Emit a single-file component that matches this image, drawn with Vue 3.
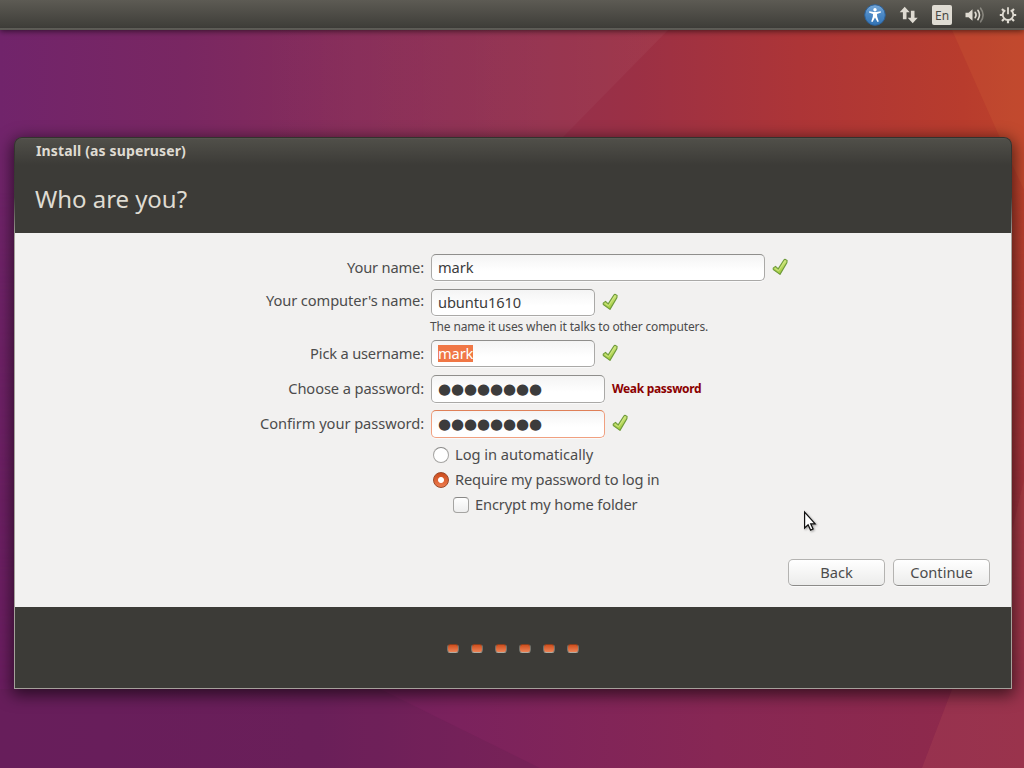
<script setup>
const steps = [1, 2, 3, 4, 5, 6]
const rows = [
  { id: 'name', label: 'Your name:', value: 'mark', ok: true },
  { id: 'host', label: "Your computer's name:", value: 'ubuntu1610', ok: true },
  { id: 'user', label: 'Pick a username:', value: 'mark', ok: true, selected: true },
  { id: 'pass', label: 'Choose a password:', value: '●●●●●●●●', secret: true, warn: 'Weak password' },
  { id: 'confirm', label: 'Confirm your password:', value: '●●●●●●●●', secret: true, ok: true },
]
</script>

<template>
  <div class="desktop">
    <svg class="wallpaper" width="1024" height="768" viewBox="0 0 1024 768" preserveAspectRatio="none">
      <defs>
        <linearGradient id="top" x1="0" y1="0" x2="1" y2="0">
          <stop offset="0" stop-color="#71246b" />
          <stop offset=".18" stop-color="#792762" />
          <stop offset=".35" stop-color="#882d59" />
          <stop offset=".5" stop-color="#92304f" />
          <stop offset=".62" stop-color="#9b3045" />
          <stop offset=".78" stop-color="#ad3537" />
          <stop offset=".94" stop-color="#b83c2d" />
          <stop offset="1" stop-color="#bd422c" />
        </linearGradient>
        <linearGradient id="low" x1="0" y1="0" x2="1" y2="0">
          <stop offset="0" stop-color="#6b1e60" />
          <stop offset=".3" stop-color="#6e205d" />
          <stop offset=".45" stop-color="#7b225d" />
          <stop offset=".7" stop-color="#872754" />
          <stop offset="1" stop-color="#902a49" />
        </linearGradient>
        <linearGradient id="fade" x1="0" y1="0" x2="0" y2="1">
          <stop offset=".25" stop-color="#fff" stop-opacity="0" />
          <stop offset=".9" stop-color="#fff" />
        </linearGradient>
        <linearGradient id="ray" x1="0" y1="0" x2="1" y2="0">
          <stop offset=".1" stop-color="#fff" stop-opacity="0" />
          <stop offset="1" stop-color="#fff" />
        </linearGradient>
        <mask id="m"><rect width="1024" height="768" fill="url(#fade)" /></mask>
      </defs>
      <rect width="1024" height="768" fill="url(#top)" />
      <rect width="1024" height="768" fill="url(#low)" mask="url(#m)" />
      <path d="M668 30 562 138H200V30z" fill="url(#ray)" opacity=".04" />
      <path d="M952 30 1000 138 1024 190V30z" fill="#d96a36" opacity=".2" />
      <path d="M380 689 540 768H0V689z" fill="#5a1c4d" opacity=".2" />
      <path d="M1024 480 1011 535 922 768H1024z" fill="#c55a5a" opacity=".2" />
    </svg>

    <header class="panel">
      <svg class="access" width="22" height="22" viewBox="0 0 22 22">
        <defs><linearGradient id="blue" x1="0" y1="0" x2="0" y2="1"><stop stop-color="#78a9d9" /><stop offset=".5" stop-color="#4987c5" /><stop offset="1" stop-color="#3474b5" /></linearGradient></defs>
        <circle cx="11" cy="11" r="10.3" fill="url(#blue)" stroke="#2d6199" />
        <circle cx="11" cy="5.7" r="1.7" fill="#fff" />
        <path d="M5.3 7.2 9.5 8.1h3l4.2-.9.3 1.2-4 1.5.2 2.9 1.6 4.6-1.3.5L11 13.6 8.5 17.9l-1.3-.5L8.8 12.8 9 9.9 5 8.4z" fill="#fff" />
      </svg>
      <svg class="net" width="20" height="18" viewBox="0 0 20 18" fill="#dfdbd2">
        <path d="M5.7.8 10.7 6.3H7.5v7H3.9v-7H.7zM13.7 17.2 8.7 11.7h3.2v-7h3.6v7h3.2z" />
      </svg>
      <span class="lang">En</span>
      <svg class="sound" width="20" height="18" viewBox="0 0 20 18">
        <path d="M.5 6.7h3L7.5 3.2v11.6l-4-3.5h-3z" fill="#dfdbd2" />
        <g fill="none" stroke="#dfdbd2" stroke-width="1.6" stroke-linecap="round">
          <path d="M10.1 6.3q2 2.7 0 5.4" />
          <path d="M12.9 4.3q3.2 4.7 0 9.4" />
          <path d="M15.6 2.2q5 6.8 0 13.6" opacity=".4" />
        </g>
      </svg>
      <svg class="gear" width="18" height="18" viewBox="0 0 18 18" fill="none" stroke="#dfdbd2">
        <path d="M6.3 4.2a5.3 5.3 0 1 0 5.4 0" stroke-width="1.9" />
        <path d="M9 1.2v7" stroke-width="1.8" />
        <path d="M3 3l2 2M15 3l-2 2M.8 9H4M14 9h3.2M3 15l2-2M15 15l-2-2M9 14v3.2" stroke-width="2.2" />
      </svg>
    </header>

    <main class="window">
      <div class="heading">
        <div class="title">Install (as superuser)</div>
        <h1>Who are you?</h1>
      </div>
      <section class="content">
        <div class="form">
          <template v-for="r in rows" :key="r.id">
            <div class="row" :class="r.id">
              <label><span>{{ r.label }}</span></label>
              <div class="field" :class="{ secret: r.secret }">
                <span :class="{ selected: r.selected }">{{ r.value }}</span>
              </div>
              <svg v-if="r.ok" class="tick" width="17" height="18" viewBox="0 0 17 18">
                <defs><linearGradient id="leaf" x1="0" y1="0" x2="0" y2="1"><stop stop-color="#cfe67e" /><stop offset="1" stop-color="#a2cb3d" /></linearGradient></defs>
                <path d="M1.2 10.1 3.5 8.4 6.2 10.9 11.9 2Q12.6 1 13.7 1.6L15.1 2.5 14.9 4.6 8 16.4 1.3 11.5z" fill="url(#leaf)" stroke="#6f9b3b" stroke-width="1.1" stroke-linejoin="round" />
                <path d="M2.8 10.2 6.5 12.8 12.8 3" fill="none" stroke="#d3e98c" stroke-width=".8" />
              </svg>
              <strong v-if="r.warn">{{ r.warn }}</strong>
            </div>
            <div v-if="r.id === 'host'" class="hint"><span>The name it uses when it talks to other computers.</span></div>
          </template>
        </div>
        <div class="options">
          <div class="option auto"><i class="radio"></i><span>Log in automatically</span></div>
          <div class="option require"><i class="radio on"></i><span>Require my password to log in</span></div>
          <div class="option encrypt"><i class="check"></i><span>Encrypt my home folder</span></div>
        </div>
        <div class="actions">
          <button class="back">Back</button>
          <button class="continue">Continue</button>
        </div>
      </section>
      <footer><i v-for="s in steps" :key="s"></i></footer>
    </main>

    <svg class="cursor" width="16" height="23" viewBox="0 0 16 23">
      <path d="M1.6 2v16l3.5-3.3 2.5 5.4 2.5-1.1-2.4-5.2h4.5z" fill="#fff" stroke="#111" stroke-width="1.2" />
    </svg>
  </div>
</template>

<style>
html, body { margin: 0; overflow: hidden; }
</style>

<style scoped>
* { box-sizing: border-box; }
.desktop { position: relative; width: 1024px; height: 768px; overflow: hidden; font: 14.67px/20px "Noto Sans", "Open Sans", sans-serif; color: #4c4c4c; }
.wallpaper { position: absolute; inset: 0; }
.panel { position: relative; height: 30px; display: flex; align-items: center; background: linear-gradient(#5d5b54, #403f3a 26px, #3c3b37 28px, #5f5e58 28px, #5a5953 30px); box-shadow: 0 1px 6px rgba(0,0,0,.6); }
.access { margin-left: 864px; }
.net { margin-left: 13px; }
.lang { width: 20px; height: 20px; margin-left: 13px; border-radius: 2px; background: #dfdbd2; color: #4a4944; font-size: 12px; line-height: 21px; text-align: center; }
.sound { margin-left: 13px; }
.gear { margin-left: 14px; }
.window { position: relative; width: 998px; height: 552px; margin: 107px 0 0 14px; padding: 1px; border-radius: 8px 8px 0 0; box-shadow: 0 4px 16px 2px rgba(0,0,0,.6); background: linear-gradient(#33322e, #3c3b37 60px, #a5a19b 100px); overflow: hidden; }
.heading { height: 95px; padding: 3px 0 0 21px; border-radius: 7px 7px 0 0; background: linear-gradient(#5b5a53 0, #504f49 1px, #3c3b37 27px); color: #dfdbd2; }
.title { font-weight: 700; font-size: 14px; letter-spacing: .14px; white-space: nowrap; }
h1 { margin: 21px 0 0 -1px; font-size: 24px; line-height: 34px; font-weight: 400; letter-spacing: -.05px; }
.content { height: 374px; padding-top: 21px; background: #f2f1f0; }
.row { display: flex; align-items: center; height: 27px; }
label { width: 409px; margin-right: 7px; padding-bottom: 2px; text-align: right; letter-spacing: -.1px; white-space: nowrap; }
.user label { letter-spacing: -.19px; }
.name label { letter-spacing: -.16px; }
.field { width: 164px; height: 27px; padding: 3px 6px; border: 1px solid #aaa9a7; border-top-color: #8f8e8c; border-radius: 5px; background: linear-gradient(#f4f4f4, #fff 16px); box-shadow: 0 1px #fafafa; color: #3c3c3c; line-height: 19px; letter-spacing: -.1px; white-space: nowrap; }
.name .field { width: 334px; }
.host, .pass, .confirm { margin-top: 8px; }
.confirm { margin-top: 7px; }
.host label { padding-bottom: 5px; }
.pass, .confirm { height: 28px; }
.confirm label { letter-spacing: -.06px; }
.secret { width: 174px; height: 28px; font: 15px/20px "DejaVu Sans", sans-serif; letter-spacing: -.1px; }
.confirm .field { border-color: #f0a080; border-top-color: #df8058; }
.selected { display: inline-block; height: 17px; line-height: 17px; background: #f07746; color: #fff; letter-spacing: -.15px; }
.tick { margin: 0 0 2px 7px; }
strong { margin-left: 7px; font-size: 12px; line-height: 18px; letter-spacing: -.33px; color: #8b0000; white-space: nowrap; }
.hint { height: 24px; padding-left: 415px; font-size: 12px; line-height: 22px; letter-spacing: -.145px; white-space: nowrap; }
.options { margin-top: 4px; padding-left: 418px; }
.option { display: flex; align-items: center; height: 25px; gap: 6px; letter-spacing: -.14px; white-space: nowrap; }
.option span { padding-bottom: 2px; }
.auto { letter-spacing: -.03px; }
.encrypt { padding-left: 20px; }
.radio, .check { width: 16px; height: 16px; border: 1px solid #a5a4a2; border-top-color: #898886; border-radius: 50%; background: #fff; }
.check { border-radius: 4px; background: linear-gradient(#fff, #eee); }
.on { border-color: #9a4829; background: radial-gradient(circle, #fff 0 2.5px, transparent 3.5px), linear-gradient(#cb4b1c, #ed7b4e); }
.actions { display: flex; justify-content: flex-end; gap: 8px; padding: 42px 21px 0 0; }
button { width: 97px; height: 27px; padding: 0 0 2px; border: 1px solid #b4b3b1; border-bottom-color: #8c8b89; border-radius: 5px; background: linear-gradient(#fff, #ececeb); box-shadow: 0 1px #fafafa; font: inherit; color: inherit; }
footer { display: flex; justify-content: center; gap: 12px; height: 81px; padding-top: 37px; background: #3c3b37; }
footer i { width: 12px; height: 9px; border: 1px solid #73736c; border-top-color: #8b3d1c; border-bottom-color: #b1aca2; border-radius: 3.5px; background: linear-gradient(#cf4f1e, #ed8356); }
.cursor { position: absolute; left: 803px; top: 510px; filter: drop-shadow(1px 1px 1px rgba(0,0,0,.35)); }
</style>
